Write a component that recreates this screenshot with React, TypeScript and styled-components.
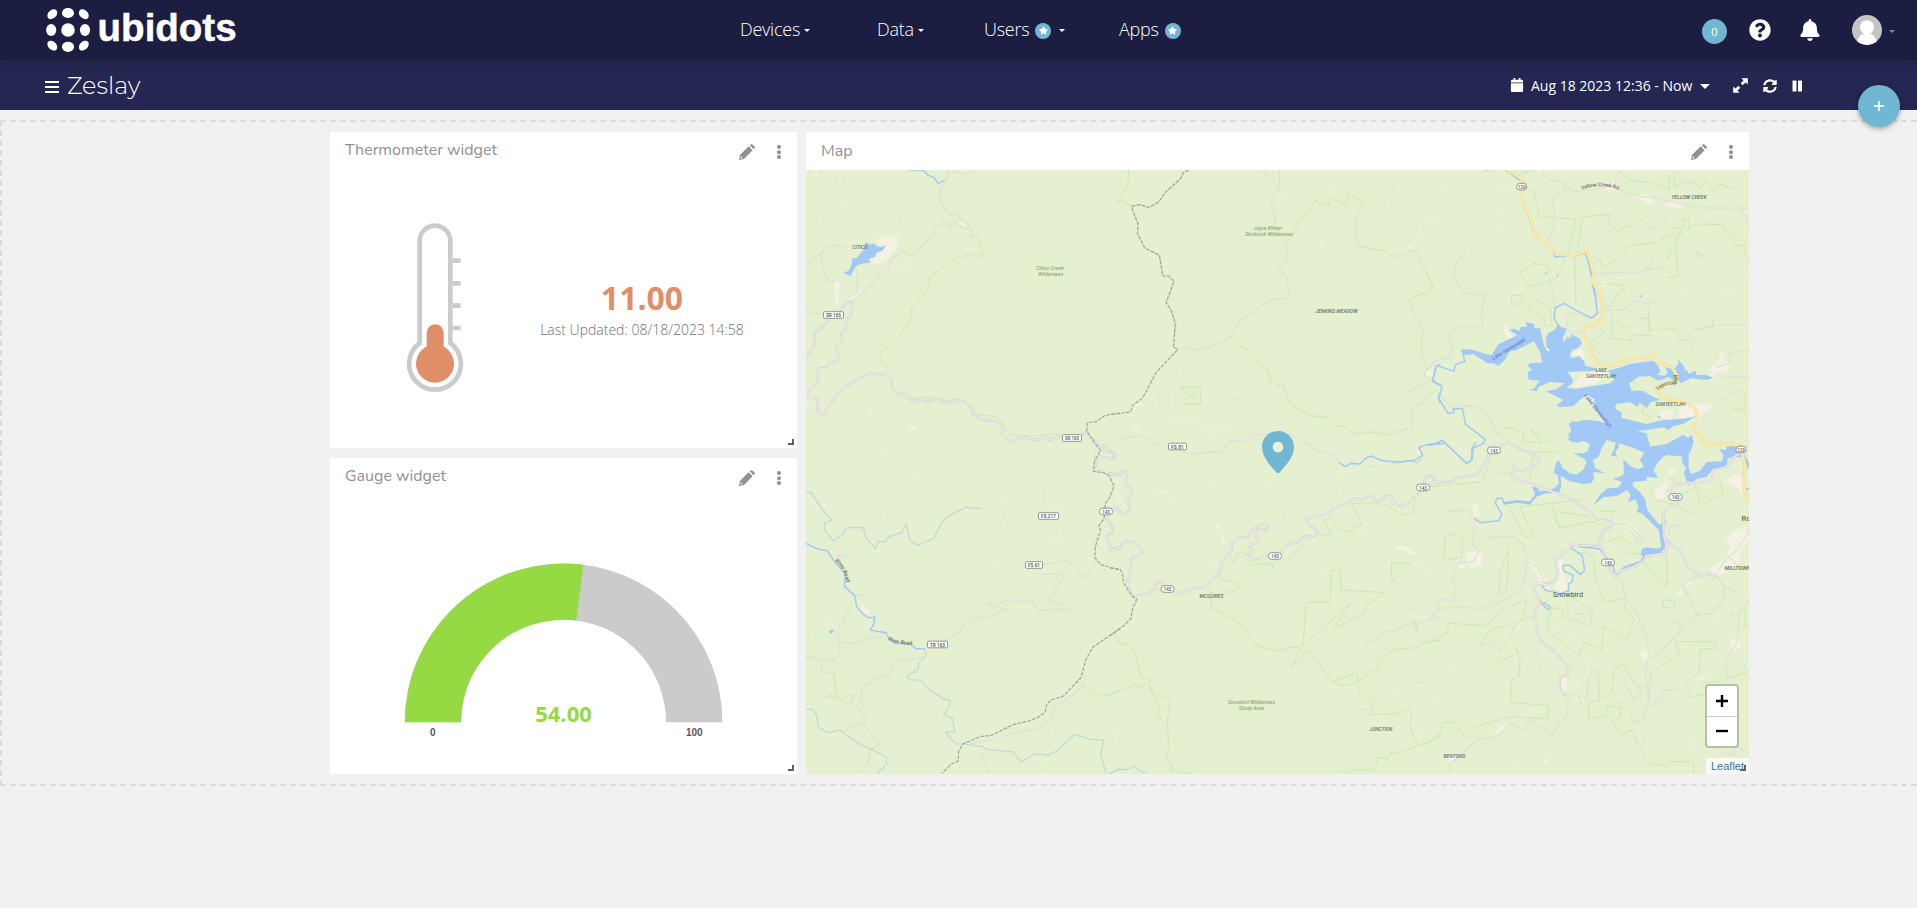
import React from "react";
import styled, { createGlobalStyle } from "styled-components";
import { FaStar, FaQuestionCircle, FaBell, FaCalendar, FaSyncAlt } from "react-icons/fa";

const GlobalStyle = createGlobalStyle`
  * { box-sizing: border-box; }
  body {
    margin: 0;
    background: #f1f1f1;
    font-family: "Open Sans", sans-serif;
    overflow: hidden;
  }
`;

/* ---------- top bar ---------- */

const TopBar = styled.header`
  position: relative;
  z-index: 2;
  display: flex;
  align-items: center;
  height: 60px;
  padding-left: 45px;
  background: #1b1e40;
  color: #fff;
  box-shadow: 0 2px 9px rgba(20, 20, 40, 0.3);
`;

const LogoLink = styled.div`
  width: 695px;
  height: 60px;
`;

const Nav = styled.nav`
  display: grid;
  grid-template-columns: 137px 107px 135px 583px;
`;

const NavItem = styled.div`
  display: flex;
  align-items: center;
  height: 60px;
  font-size: 18px;
  font-weight: 300;
  letter-spacing: -0.25px;
  line-height: 24px;
  padding-bottom: 2px;
`;

const Caret = styled.span<{ $size?: number; $gap?: number; $faded?: boolean }>`
  width: 0;
  height: 0;
  margin-left: ${(p) => p.$gap ?? 4}px;
  margin-top: 3px;
  border: ${(p) => p.$size ?? 3}px solid transparent;
  border-top-color: ${(p) => (p.$faded ? "#8587a0" : "#fff")};
  border-bottom: 0;
`;

const StarBadge = styled.span`
  display: flex;
  align-items: center;
  justify-content: center;
  width: 16px;
  height: 16px;
  margin: 3px 0 0 6px;
  border-radius: 50%;
  background: #71b7d1;
  font-size: 9px;
`;

const UserTools = styled.div`
  display: flex;
  align-items: center;
  height: 58px;
`;

const CountBadge = styled.span`
  display: flex;
  align-items: center;
  justify-content: center;
  width: 25px;
  height: 25px;
  margin: 3px 22px 0 0;
  border-radius: 50%;
  background: #71b7d1;
  font-size: 11px;
`;

const Avatar = styled.svg`
  margin-left: 31px;
`;

const HelpIcon = styled(FaQuestionCircle)`
  margin-right: 28px;
`;

/* ---------- dashboard bar ---------- */

const DashBar = styled.div`
  display: flex;
  align-items: center;
  height: 50px;
  padding: 0 114px 0 45px;
  background: #232751;
  color: #fff;
`;

const MenuButton = styled.div`
  display: flex;
  flex-direction: column;
  gap: 3px;
  width: 14px;
  margin: 3px 8px 0 0;
  span {
    height: 2px;
    background: #fff;
  }
`;

const DashTitle = styled.h1`
  margin: 2px 0 0;
  font-family: Montserrat, Inter, sans-serif;
  font-size: 24px;
  font-weight: 300;
  line-height: 30px;
  flex: 1;
`;

const DateRange = styled.div`
  display: flex;
  align-items: center;
  font-size: 14px;
  span:first-of-type {
    width: 163px;
    margin-left: 7px;
    white-space: nowrap;
  }
`;

const DashActions = styled.div`
  display: flex;
  align-items: center;
  margin: 1px 0 0 23px;
  gap: 15px;
`;

const AddButton = styled.button`
  position: absolute;
  z-index: 3;
  top: 85px;
  left: 1858px;
  display: flex;
  align-items: center;
  justify-content: center;
  width: 42px;
  height: 42px;
  padding: 0;
  border: 0;
  border-radius: 50%;
  background: #71b7d1;
  box-shadow: 0 2px 5px rgba(0, 0, 0, 0.3);
`;

/* ---------- widgets ---------- */

const Board = styled.main`
  display: grid;
  grid-template-columns: 467px 943px;
  grid-template-rows: 316px 316px;
  gap: 10px 9px;
  height: 666px;
  margin-top: 10px;
  padding: 10px 0 0 328px;
  border: 2px dashed #dcdcdc;
  border-right: 0;
`;

const Widget = styled.section<{ $tall?: boolean }>`
  position: relative;
  display: flex;
  flex-direction: column;
  grid-row: ${(p) => (p.$tall ? "1 / span 2" : "auto")};
  grid-column: ${(p) => (p.$tall ? 2 : 1)};
  background: #fff;
`;

const WidgetHeader = styled.div`
  display: flex;
  align-items: center;
  height: 38px;
  padding: 0 16px 0 15px;
  color: #919194;
`;

const WidgetTitle = styled.h2<{ $drop?: number }>`
  flex: 1;
  margin: ${(p) => p.$drop ?? 0}px 0 2px;
  font-family: Nunito, "Open Sans", sans-serif;
  font-size: 16px;
  font-weight: 400;
  line-height: 22px;
`;

const Dots = styled.svg`
  margin: 2px 0 0 22px;
`;

const Pencil = styled.svg`
  margin-top: 2px;
`;

const ResizeHandle = styled.span`
  position: absolute;
  z-index: 2;
  right: 3px;
  bottom: 3px;
  width: 6px;
  height: 6px;
  border: solid #606063;
  border-width: 0 2px 2px 0;
`;

const ThermoBody = styled.div`
  display: flex;
  align-items: flex-start;
  padding: 51px 0 0 76px;
`;

const Reading = styled.div`
  width: 280px;
  margin: 55px 0 0 38px;
  text-align: center;
`;

const ReadingValue = styled.div`
  font-size: 32px;
  font-weight: 700;
  line-height: 44px;
  color: #e08e68;
`;

const ReadingTime = styled.div`
  font-size: 14px;
  font-weight: 300;
  line-height: 19px;
  color: #6e6e72;
`;

const GaugeBody = styled.div`
  padding: 66px 0 0 73px;
`;

const MapCanvas = styled.div`
  position: relative;
  flex: 1;
  overflow: hidden;
`;

const MapSvg = styled.svg`
  display: block;
`;

const ZoomControl = styled.div`
  position: absolute;
  right: 10px;
  bottom: 26px;
  width: 34px;
  border: 2px solid rgba(0, 0, 0, 0.2);
  border-radius: 4px;
  background: #fff;
  background-clip: padding-box;
`;

const ZoomKey = styled.div`
  display: flex;
  align-items: center;
  justify-content: center;
  height: 30px;
  & + & {
    padding-bottom: 2px;
    border-top: 1px solid #ccc;
  }
`;

const Attribution = styled.div`
  position: absolute;
  right: 0;
  bottom: 0;
  height: 16px;
  padding: 0 5px;
  background: rgba(255, 255, 255, 0.7);
  font: 11px/16px "Liberation Sans", Arial, sans-serif;
  color: #3a73ad;
`;

/* ---------- map data: coordinates are thirds of a pixel inside each tile ---------- */

type Tile = {
  x: number;
  y: number;
  roads?: string[];
  tracks?: string[];
  paths?: string[];
  bounds?: string[];
  rivers?: string[];
  streams?: string[];
  lakes?: string[];
  patches?: string[];
  highways?: string[];
  border?: string[];
};

const tiles: Tile[] = [
  {
    x: 800,
    y: 120,
    rivers: ["M330 150H362L372 153L384 166L402 172L414 190L434 182"],
    bounds: [
      "M446 150L440 180L420 208L418 232L426 250L436 270L448 284L470 282L484 296L516 326L512 350L534 348L542 380L550 410L514 402L466 416L388 470L390 500L336 566L330 600L294 656L250 690L240 716L258 740L262 765",
      "M292 818L320 820L340 836L368 830L410 832L440 842L480 836L512 856L530 884L590 890L616 924L630 948L650 946L690 948L760 942L790 946",
      "M960 234L954 242L960 252",
    ],
    tracks: [
      "M446 150L440 180L420 208L418 232L426 250L436 270L448 284L470 282L484 296L480 302",
      "M456 150L494 164L526 156L526 150",
      "M512 326L484 322L464 304L452 324L438 306L406 320L400 342L342 408L306 394L272 418L266 446L240 464L216 492L180 522L164 540",
      "M172 448L170 520",
      "M18 446L30 420L60 402L84 374L100 374L132 382",
      "M84 374L64 402L68 440L86 484L108 484",
      "M18 566L30 580L70 582",
    ],
    paths: [
      "M98 160L102 210L88 240L64 246",
      "M146 160L140 190L152 206L130 236L134 262L66 280L58 296L72 326L84 372",
      "M268 212L280 206L304 212L308 224",
      "M322 260L300 286L288 290L294 316L294 350",
      "M406 262L412 298L404 320",
      "M26 304L48 298",
      "M250 312L246 330L226 340",
      "M270 456L300 450L330 426",
      "M20 820L40 798L96 784L138 782L148 790",
      "M24 440L22 460L34 474",
      "M720 950L740 976L752 972",
    ],
    patches: [
      "M104 482L118 484L118 510L112 560L106 556Z",
      "M140 542L178 514L188 520L158 540Z",
      "M222 360L262 348L298 354L290 384L270 412L240 430L210 430L226 410L230 398L256 380Z",
      "M304 442L328 422L322 434Z",
      "M338 390L350 376L344 388Z",
      "M332 922L350 918L352 930L326 934Z",
      "M470 304L498 312L506 324L486 316Z",
      "M46 156L54 160L52 172L46 170Z",
      "M192 320L202 316L196 324Z",
      "M454 912L464 902L462 910Z",
      "M18 836L32 846L20 852Z",
      "M208 868L216 866L212 886L206 882Z",
      "M324 952L332 954L326 958Z",
      "M248 984L256 984L254 992Z",
    ],
    lakes: [
      "M196 366L212 374L222 370L232 380L246 382L258 376L248 392L230 398L226 410L206 416L212 428L190 430L172 436L160 450L152 468L130 458L146 452L154 436L158 414L170 414L190 392Z",
    ],
    roads: [
      "M18 714L44 676V640L76 612L100 584L130 562L144 542L156 546L158 576L140 604L138 626L124 640L126 666L108 684L116 712L108 726L88 730L80 745H60L52 752L54 788L30 808L18 828",
      "M18 832H46L52 840V876L64 884L76 880L84 858L104 838L128 802L144 796L210 758L262 766L272 778L278 806L292 826L320 830L336 844L368 838L380 846L410 834L442 850L484 842L514 862L520 884L548 900L594 902L606 914L608 944L636 966L656 956L680 952L704 960L730 952L750 960L770 952L790 954",
      "M846 942L862 936L880 968L910 992",
    ],
    border: ["M960 880L936 882L912 888L892 904L862 908L860 934L882 964"],
  },
  {
    x: 1110,
    y: 120,
    bounds: [
      "M56 150L54 190L26 242L66 258",
      "M508 150V202L482 242L496 286L494 316L524 370L546 352L568 304L592 280L618 240L634 260L640 246L658 258L660 236L708 256L716 218L730 232L760 244L738 300L736 340L744 378L822 392L856 414L892 390L922 396L970 502L962 512L898 536L908 574L938 632L934 700L950 744L942 770L968 786",
      "M362 648L398 686L416 690L474 754L482 788L520 798L538 850L600 888L646 890L676 918L704 920L734 942L790 936L834 946L862 934L908 920L902 880L916 856L936 850L940 838L984 806",
      "M204 688L234 680L260 692L340 666L362 648",
      "M212 802H272V852H220L256 850V830L234 826Z",
      "M236 152L218 160L214 178L168 218L148 246L118 264L90 256L66 260L86 312L84 340L106 384L150 406L160 468H176L194 484L170 548L186 572L198 612L192 682",
    ],
    tracks: [
      "M362 648L390 604L404 594L462 552L490 538L532 536L540 520L530 490L532 474L504 444L528 426L532 390L524 368",
      "M26 946L40 956L82 948L110 956L150 976L170 990",
      "M340 990L352 968L374 962L400 964L430 948L470 940L540 942L580 966L620 990",
      "M260 692L340 666",
      "M888 824L908 808L942 788",
      "M944 758L968 728L990 716",
      "M506 202L490 180L460 152",
    ],
    paths: [
      "M508 202L524 240L560 222L596 220L580 200L600 186L570 180",
      "M640 220L650 206L670 204L674 190L706 196L712 184L738 160L748 160L740 150",
      "M950 174L936 164L902 168L888 186L864 192L862 222L830 244L832 268L798 300L790 320L764 334L744 326",
      "M990 284L974 296L954 290L926 322L936 350L918 358L898 380L866 404",
      "M228 718L206 760L192 800L186 846L192 890",
      "M132 810L136 850L160 896L190 900L220 880L236 896L268 890",
      "M272 792L312 788L318 802L340 832L370 816L400 820L430 784L388 770",
      "M204 912L250 906L294 912L360 916L340 930L300 912L280 922L320 942L274 940L246 926",
      "M450 914L480 916L520 920L590 926L640 934",
      "M120 818H98M106 848L88 858",
      "M48 930L60 916L88 912L74 936L110 938L140 924L158 930",
    ],
    patches: [
      "M624 376L636 362L638 376Z",
      "M892 380L906 370L912 374L888 396L868 404Z",
      "M944 754L970 752L968 768L950 764Z",
      "M294 428L302 430L298 434Z",
      "M234 490L242 490L238 494Z",
      "M62 930L80 914L86 918L70 934Z",
      "M68 878L80 850L104 850L84 860L72 880Z",
    ],
    rivers: ["M990 733L976 744L968 784L990 796", "M990 822L985 832L990 846"],
    border: [
      "M236 150L220 158L212 176L166 216L146 246L118 262L90 254L66 258L68 272L84 312L82 340L104 384L148 406L158 468H176L192 484L168 548L184 572L196 612L190 682L204 688L138 758L98 834L68 856L62 876L0 884",
    ],
  },
  {
    x: 1430,
    y: 120,
    bounds: [
      "M270 164L296 210L312 216L328 290L438 298L414 396L434 414L438 558",
      "M438 414L458 290L542 284L534 308L568 338L580 322L612 314L630 296L672 328L706 300L722 322L760 324V296H776V326L800 312L880 314L892 344L908 350L912 374L946 378L944 404L957 412",
      "M310 150L272 160",
      "M570 156L602 182L646 186L718 206V166L734 170V202L764 182L794 190L808 206L828 184L848 210L872 192L908 206",
      "M488 410L510 420L516 446L588 398L594 378L664 370L754 334L740 350V396L708 416L754 338",
      "M740 400L744 470L710 472",
      "M312 430L268 458L298 500L358 484L362 474L342 462L362 450L340 434Z",
      "M244 526H280L274 552H246Z",
      "M520 560L546 580L544 656L604 660L606 644L666 648L656 626L660 594L628 596L590 626L560 606",
      "M500 490L580 496L582 514L556 526L544 556L520 560",
      "M484 620L500 622L524 634L482 668L488 680L530 724",
      "M654 560L658 630L740 626L748 658L778 660",
      "M346 600L290 562L320 540L360 560L366 620L340 614L346 596",
      "M850 600V622L802 626L768 648",
      "M880 836L920 810L948 820L944 870L908 866L880 836Z",
      "M800 396L818 406L808 416Z",
      "M0 484L10 496L0 508",
      "M606 800L650 840L652 814L602 782",
      "M210 942L224 924L252 922V930L280 934V966L336 968L304 930L366 972",
      "M600 846L640 860L636 880L660 890L640 912",
    ],
    tracks: [
      "M340 162L350 178L400 186L410 210L370 230L372 330L354 352L360 380",
      "M404 206L420 204L430 212L500 208L540 196L610 226L690 236L760 254L790 262L850 264L957 266",
      "M556 190L562 160L576 150",
      "M492 462L560 458H630L656 440L670 420M640 450L706 444",
      "M400 400L406 420L380 470L360 490L370 530L376 560",
      "M0 740L20 720L58 714L66 696L56 650L86 620H160L154 580L168 520L148 524L100 518L70 470L76 430L104 400",
      "M404 660L430 640L460 634L430 636L406 626L412 604L404 588L430 580L466 590L488 596L510 574",
      "M486 706L516 726L550 740",
      "M520 568L580 570L600 556L610 540L650 550L676 540L682 560",
      "M778 640L792 660L786 690",
      "M957 770L880 772M860 740L900 730L900 700L957 690",
      "M768 650L800 628L850 614H957",
      "M926 266L948 290L957 318",
      "M20 820L36 832L62 860L130 858L160 870L184 900L192 930L210 946L240 968",
      "M176 980L200 974L232 966L260 980L280 990",
    ],
    paths: [
      "M36 156L60 176L36 208L60 220L26 262L36 280L0 296",
      "M234 250L200 270L206 330L230 312L260 334",
      "M957 470L926 480L912 518L740 520",
      "M370 232L350 240L340 250",
      "M506 490L530 500L520 480",
      "M580 920L630 890L660 900L720 890",
      "M700 866L730 850L760 870L730 900",
      "M640 300L660 290L680 276",
      "M880 730L910 744L930 770",
      "M786 690L792 710",
      "M230 590L280 600L300 640",
    ],
    patches: [
      "M514 196L556 182L572 200L564 212L530 210Z",
      "M606 230L646 222L672 236L666 250L690 256L736 240L760 256L754 268L730 264L700 252L660 254L640 240Z",
      "M212 208L224 200L230 212Z",
      "M740 890L752 856L800 852L854 850L836 870L812 884L810 900L790 904Z",
      "M844 740L870 720L868 700L884 698L884 720L900 730L896 750L860 760L850 770L862 780L842 784Z",
      "M424 700L452 684L460 700L462 724L444 716Z",
      "M430 804L450 766L500 756L540 756L500 790L470 796Z",
      "M218 618L230 612L240 640L250 650L232 656Z",
      "M506 496L520 478L530 498Z",
      "M684 888L700 872L730 868L726 900Z",
    ],
    rivers: [
      "M96 688L104 724L76 734L72 754L20 736L8 780L36 798L26 836L54 880L72 878L70 866L98 866L106 912L166 958L160 970L130 984L126 1020L110 1030L36 960L16 972L0 976",
      "M226 150L274 184L280 256L296 290L312 340L370 390L374 410L430 408L466 398L484 460L486 490L498 540L502 580L484 594L440 572L400 550L376 564L372 596L386 616",
      "M466 398L478 440L488 486L496 520L500 570",
    ],
    lakes: [
      "M92 694L106 688L130 690L160 700L184 706L206 672L240 656L262 646L238 630L250 626L268 632L272 622L292 620L286 606L312 612L314 626L330 624L336 650L342 676L350 692L362 694L350 680L348 652L356 638L374 630L384 612L392 620L410 626L406 640L398 652L402 670L412 650L420 656L426 644L450 656L456 670L444 684L426 690L420 704L424 714L448 708L462 724L466 738L496 744L500 752L412 756L424 770L430 786L410 804L440 806L540 790L552 780L540 760L530 752L566 744L600 732L670 722L684 736L692 756L682 764L704 768L712 758L706 742L720 740L730 752L746 730L744 718L756 732L766 744L762 754L772 750L776 762L796 752L800 766L826 764L852 774L826 780L800 776L784 774L752 790L742 776L730 782L716 770L700 778L684 782L660 768L626 770L598 790L604 812L636 812L660 826L690 840L662 846L650 864L630 848L622 860L600 846L560 852L554 864L576 880L574 894L600 900L650 912L700 900L760 896L800 888L760 912L730 918L716 930L700 922L650 930L620 934L570 926L560 924L604 936L640 950L660 972L650 1000L600 980L530 960L516 984L450 960L424 966L414 940L434 936L418 912L430 902L450 912L456 900L500 902L530 910L510 886L490 858L494 838L470 824L450 840L430 858L390 862L380 856L400 840L348 814L380 808L404 790L360 786L326 800L320 814L296 810L312 806L330 782L296 780L294 756L306 750L292 736L304 728L336 728L332 700L312 664L260 690L240 694L224 720L206 738L190 730L172 730L130 702L106 706Z",
      "M700 990L720 972L742 960L764 962L786 944L790 966L784 990L770 1010L700 1004Z",
      "M888 980L920 976L936 990L957 1030V1046L930 1010L894 1014Z",
      "M344 456L354 458L348 462Z",
      "M626 526L636 526L634 534Z",
      "M680 886L692 890L688 896Z",
      "M380 462L388 466L382 470Z",
      "M164 150H180L172 153Z",
    ],
    highways: [
      "M232 150L274 174L280 256L300 290L316 342L380 402L428 408L466 392L478 408L492 462L486 484L508 516L520 568L514 600L492 612L464 620L456 640L480 676L484 708L498 726L530 740L570 730L600 716L640 714L672 704L690 728L728 744L742 770L738 786L700 794L682 812L692 832L742 842L776 852L796 868L802 890L786 922L826 970L900 970L930 978L946 1040L940 1100L957 1145",
    ],
  },
  {
    x: 800,
    y: 440,
    streams: [
      "M18 156L34 158L50 184L72 214L96 240L74 250L72 268L100 302L126 286L140 264L190 262L196 290L226 326L234 304L256 306L266 290L306 278L318 252L330 300L352 316L400 296L430 240L460 220L500 202L545 206",
      "M374 626L378 650L356 668L354 688L320 710L332 720L364 720L386 748L430 776L450 782L448 802L432 824L458 836L464 874L436 878L468 912L488 912",
      "M488 912L548 920L560 928L640 936L662 966L700 944L722 942L744 946L776 930L822 884L870 898L912 900L902 940L918 1000",
      "M18 808H38L50 826L54 860L84 878L122 870L140 886L178 912L216 928L258 950L260 972L234 1000",
      "M930 1000L960 984",
    ],
    rivers: [
      "M18 310L50 326L82 332L100 360L134 400L134 440L164 466L170 500L186 520L206 534L224 532L222 550L212 570L230 574L258 578L266 594L282 610L330 612L348 626H374",
    ],
    bounds: [
      "M18 652L44 654L64 668V694L102 698L104 730L112 756L80 770L114 772L140 792L156 788V766L176 768L180 790L168 800L196 834L190 850L238 916L212 926L204 970L178 1000",
      "M832 728L904 770L932 762L960 754",
      "M960 610L942 592V578",
      "M886 320L892 280M940 140L918 190M880 60L890 30",
    ],
    tracks: [
      "M168 466L196 464L208 448",
      "M152 486L156 500L134 526L132 548L116 560L114 600L130 610L186 608L190 596L240 594L256 578",
      "M116 600L120 640L96 662L46 656L18 648",
      "M374 650L356 656L302 660L280 672L266 706L240 710L184 742L190 800",
      "M440 602L476 576L510 536L560 532L618 508L560 494L600 490L624 478L648 484L700 484L712 510L780 508L810 512L784 490L742 482L760 470L764 448L792 408L780 402L716 402",
      "M728 374L800 362L828 380L848 412L866 402L888 366",
      "M490 912L540 906L580 900L640 878L700 870L750 840L760 800L800 780L846 740L858 706",
      "M180 850L150 862L130 878",
      "M100 300L108 318L142 344L136 352L106 346",
      "M628 0L640 6L650 0",
      "M540 950L562 982L570 1000M544 950L560 934",
    ],
    paths: [
      "M18 276L40 264M180 312L190 330L240 336L270 330L300 350L350 346L400 364L440 376L480 398L500 380L540 378L600 362L650 364L700 360L740 330L784 314",
      "M570 206L600 190L614 162L640 164",
      "M640 172L610 190L600 230L628 280L660 292L670 262",
      "M740 190L744 150L764 130L796 106",
      "M722 204L800 192L850 166L880 154L924 114",
      "M774 190L760 236M770 260L786 290L740 306L780 310",
      "M20 430L50 400M60 450L90 472L100 510L84 548L44 566L36 590",
      "M580 378L600 410V440",
      "M870 300L860 340L880 370M864 250L890 240",
      "M420 960L440 900",
      "M750 900L764 860L790 830L780 816L850 808",
      "M850 810L920 824L950 810M700 950L740 970L740 1000",
      "M196 850L210 870L236 900",
    ],
    patches: [
      "M66 196L82 188L74 206Z",
      "M350 98L360 96L358 104Z",
      "M354 126L364 126L360 132Z",
      "M376 116L382 118L380 124Z",
      "M246 232L258 232L250 236Z",
      "M258 28L266 38L262 46Z",
      "M180 498L192 498L210 512L198 524Z",
      "M142 246L150 248L146 252Z",
      "M740 10L754 14L742 20Z",
      "M716 400L740 398L760 392L742 406Z",
      "M956 168L960 180L952 184Z",
    ],
    lakes: ["M86 574L100 568L102 574L92 582Z"],
    roads: [
      "M882 0L900 20L918 18L922 32L944 40L940 56L914 52L898 50L886 70L890 90L926 100L960 106",
      "M914 206L950 202L960 216",
      "M914 230L936 256V276L920 290L932 324L960 326",
    ],
    border: [
      "M878 0L902 32L884 62L880 94L912 98L928 108L942 138L932 168L916 190L912 236L896 258L902 272L886 320L884 352L902 374L960 390",
      "M960 566L880 620L858 658L842 714L798 760L788 770L752 780L738 798L736 816L714 832L690 842L640 854L574 886L540 890L488 912L476 934L474 964L454 972L426 1000",
    ],
  },
  {
    x: 1110,
    y: 440,
    roads: [
      "M0 106H16L40 94L50 98L46 134L68 148L64 160L52 170L60 210L46 222L30 218L20 208L0 208",
      "M0 36H14L12 50L0 58",
      "M0 252L8 264L0 280",
      "M0 330L20 328L50 302L74 306L98 334L90 346L64 354L60 406L50 426L66 468L100 466L122 458L146 424L158 430L160 444",
      "M192 452L210 460L240 452L290 434L330 394L334 370L366 330L364 308L382 294L416 290L424 272L460 250L474 256L472 270L446 268L434 282L444 300L440 310L416 314L426 334L412 348L414 358L446 356L464 344L474 348",
      "M514 336L536 310L560 308L582 292L622 284L620 272L590 246L594 236L660 220L668 206L720 190L730 178L758 180L780 164L798 182L822 178L828 168L844 170L848 190L870 198L892 190L928 158",
      "M942 130L950 108L968 110L972 128H990",
    ],
    rivers: [
      "M688 68L706 80L724 70L750 72L766 56L784 48L810 60L830 64L872 66L916 60L938 46L926 22L950 14L990 12",
    ],
    streams: ["M0 1000L24 990L50 988L72 978L98 996L110 1000", "M850 70L890 62L924 68L934 56"],
    tracks: [
      "M218 34L240 44L300 36L336 34L350 8L370 0",
      "M590 8L620 32L640 36L670 42L688 66",
      "M766 612L800 602L826 576L860 572L880 556L930 548L990 534",
      "M990 474L980 490L990 510L960 540",
    ],
    paths: [
      "M236 52L220 80L180 98L134 146L180 160L210 154L184 190L214 176L266 152L300 120",
      "M290 112L300 138L330 126L370 112L382 100L420 108L470 124L492 110L500 98",
      "M300 70L320 80L370 70L382 60",
      "M40 144L30 180L38 200",
      "M370 196L400 180L410 160",
      "M460 136L480 130L470 120",
      "M540 200L528 236L548 250L560 280",
      "M616 130L700 98L740 90L790 88L830 100L870 98",
      "M690 90L700 120L690 160M860 140L900 110",
      "M596 366L610 390L650 394L666 368L700 360",
      "M334 514L350 494L380 470L424 446",
      "M722 490L740 520L780 516L810 522L860 514L900 526L950 530L980 540",
      "M694 656L740 640L780 608",
      "M860 692L880 680L930 686L990 660M850 750L920 736L960 740L990 780",
      "M780 750L850 764L900 772L940 770L990 800",
      "M860 910L920 880L990 880M880 830L920 840L930 900",
      "M740 260L760 270L750 300M680 230L730 240L800 230",
      "M730 800L770 800L790 790",
      "M0 920L20 900L16 870L78 850M70 930L50 900",
      "M130 960L150 980L170 984L180 1000",
    ],
    bounds: [
      "M100 466L124 450L154 448M230 452L280 444L322 466L386 446L378 426L332 420V388",
      "M304 470V506L366 534L398 562L440 616L500 634L530 624L574 620L724 488L670 566L762 520L766 498L824 458L692 450V392H664L660 486H588L580 610",
      "M580 610L544 682L596 632L668 724L742 700L744 722L720 736H692L668 724",
      "M744 722L804 684L808 664L850 628L910 624L940 610L990 600",
      "M744 722L748 754L790 786L784 824L860 822L900 808L904 822L900 864L922 916",
      "M990 880L960 906L922 916L872 940L842 938L836 956L804 952L794 990H728L712 1000L690 992L682 1000",
      "M14 580L36 614L50 608L76 640L92 710L120 722L122 750L156 768L182 780L172 840L176 920L170 950L186 980L210 1000L250 998",
      "M0 766L76 732L82 744L112 730L152 810L140 816L170 872",
      "M358 346L372 368L386 336L424 344L420 376L480 370L488 384L490 366L540 354L582 308L600 292",
      "M726 192L774 188L828 194L880 226L908 216L922 160M726 192L754 256L728 262L730 272L702 274L680 260L664 230L640 240L664 286L640 288L622 276",
      "M844 370H902L846 424Z",
      "M186 980V1000M908 540L924 560L920 574Z",
      "M960 138H990",
    ],
    patches: [
      "M314 256L326 252L332 262L318 270Z",
      "M334 284L348 300L342 316L334 310Z",
      "M850 314L890 322L916 338L900 344L880 330L856 326Z",
      "M936 360L944 386L954 396L940 392Z",
      "M594 280L606 272L616 282Z",
      "M22 180L36 176L34 186Z",
      "M300 360L306 380L302 390Z",
      "M134 148L170 158L162 162L134 152Z",
      "M910 30L930 24L930 44Z",
      "M168 322L180 322L176 326Z",
    ],
    border: ["M0 384L30 388L38 400L40 428L66 468L80 478L66 512L64 534L40 558L4 584L0 586"],
  },
  {
    x: 1430,
    y: 440,
    roads: [
      "M0 128H10L14 120L10 108L0 106",
      "M10 128L60 126L90 110L140 104L160 76L176 46L180 36",
      "M206 22L232 10L250 14L270 30L300 36L330 60L320 76L270 92L250 78L248 108L268 122L300 128L320 140L376 158L410 170L432 180L450 196L474 210L502 238L544 246V266L520 268L516 282L504 300L514 320",
      "M520 330L526 350M538 386L548 400L560 410L576 392L610 382L640 362L650 348L704 340L714 320L702 290L700 220L716 200L740 190M730 160L716 150L740 132L776 128L800 130L846 118L850 92L890 80L912 50L930 40",
      "M706 292L730 320L750 330L770 376L810 410L840 402L860 408",
      "M310 440L320 428L340 430M500 318L444 316L428 310L420 326L400 332L396 352L376 356L384 400L378 420L350 434L322 430L310 446L330 486L312 524L324 580L330 600L370 632L418 684L412 706L390 710L388 736L404 766",
    ],
    rivers: [
      "M0 12L46 10L110 70L124 62L126 26L136 8",
      "M134 236L150 248L206 242L216 224L196 190L200 176L216 174L222 190L262 184L300 190L316 166L330 156L388 154",
      "M556 410L550 380L526 350L508 326L450 320L432 310L424 324L456 346L464 390L452 404L420 376L400 376V392L430 406L426 426L416 430L416 452L388 462",
      "M330 430L346 450L372 456M328 478L344 500L356 510L360 500L342 488",
      "M946 146H957",
    ],
    lakes: [
      "M470 -60L416 -50L424 -30L414 0L440 8L464 2L480 12L474 32L462 40L430 40L462 56L470 66L460 90L440 104L420 100L398 84L388 64L384 60L376 76L372 98L382 104L388 130L374 144L352 152L330 156L318 138L306 142L316 162L300 184L262 180L222 186L222 194L262 188L300 194L320 170L348 160L386 158L394 140L392 108L420 124L460 132L482 130L492 118L490 96L524 100L496 84L488 60L506 50L516 20L512 0L530 -20L560 -6L552 30L542 46L560 50L556 34L568 20L564 6L600 4L644 14L640 44L630 60L642 80L624 88L604 80L580 58L582 100L576 108L548 116L576 126L566 142L530 146L510 164L490 196L520 172L560 168L592 150L602 166L594 186L616 178L626 200L620 216L636 220L686 270L694 320L680 326L652 322L636 326L632 346L640 348L630 362L580 380L572 392L552 406L556 412L576 398L586 384L636 370L648 344L690 342L706 322L698 270L706 246L688 254L652 210L646 180L632 158L608 138L610 126L650 122L650 110L684 114L670 90L682 70L700 50L724 40L756 34V66L768 84L762 100L774 136L800 118L830 110L850 86L890 80L894 50L916 34L912 20L884 30L866 26L880 44L876 64L830 66L810 92L784 102L776 84V40L784 0L760 -16L710 12L660 20L650 -20L560 -40Z",
      "M800 524L806 526L802 530ZM906 520L912 522L908 526ZM904 708L910 710L906 714ZM940 672L946 674L942 678ZM884 180L888 182L884 184Z",
    ],
    highways: ["M812 0L830 14L904 12L932 20L946 80L940 140L957 184"],
    tracks: [
      "M0 538L20 510L70 500L160 506L240 472L280 440L288 390L286 320L250 290L184 292L160 306",
      "M20 480L70 480L80 450L66 410L80 390L84 370L130 366L150 330L128 316L134 240",
      "M574 412L584 470L620 520L650 590L656 640L646 700L656 780L640 840L610 850L604 820",
      "M656 656L690 640L750 570L800 520L770 460L760 430L810 406",
      "M856 404L896 350L920 330L940 300L957 270M860 408L884 440L880 480L850 516M896 350L936 390L957 380",
      "M880 440L930 460M802 520L860 524M957 480L926 520L924 600L886 666L896 720",
      "M60 1000L60 970L110 930L140 900L200 890L240 850L280 870L300 840L370 886L384 850L410 830L416 780L404 766L440 760L456 790",
      "M310 534L280 536L250 564L246 590L206 632L190 614L160 612",
      "M290 366L320 380L340 420M414 430L410 480L416 530M430 520L460 522L486 510",
      "M742 748L700 750L690 780L656 800M714 540L750 550L750 580",
      "M746 200L790 222M760 256L720 260L716 280M740 130L720 110",
      "M206 98L240 104L256 76L260 92M524 268L556 250L600 256L640 300L630 320",
      "M130 230L110 210L50 216M860 920L880 940L910 942L920 920L957 940",
    ],
    paths: [
      "M44 682L100 664L120 650M44 684L110 700L160 720L240 734L300 760",
      "M130 740L180 750L240 790L290 800L330 830",
      "M356 560L400 570L420 600L460 610L420 590L390 570L370 540",
      "M540 300L600 340L620 290",
      "M20 790L60 800L130 780M30 70L80 50M520 340L560 320",
      "M330 580L340 700M460 640L480 690L464 730",
      "M490 620L530 600M560 770L590 770",
      "M740 900L760 890L800 910L790 930L750 920Z",
      "M380 960L430 990L450 980M620 860L640 930",
    ],
    bounds: [
      "M0 606L50 580L56 550L166 556L220 510L290 478L280 540L180 570L150 612L200 668L264 640L258 620L270 650L268 710L244 720L242 788L356 796L352 836L240 830L140 860L108 896L70 846L38 848L28 888L0 906",
      "M236 328L210 400L206 470L230 450Z",
      "M46 284H82L98 300L94 350L42 362Z",
      "M230 190L286 290L310 292L270 200L366 190L374 240L390 264L480 244L544 264M366 190L460 180M388 260L374 214L480 230",
      "M516 214H552L544 230M514 290L520 310L566 292L612 318L624 294L600 270",
      "M440 340L468 336L490 350L496 410L524 488L580 476M576 420L586 470L584 510L614 536L590 596L520 560L516 630L460 606L448 648L400 610L350 570L364 504L400 506L398 530L480 556L488 512L420 470",
      "M590 340L702 344L706 330L712 380V436L700 436L640 370",
      "M710 340L714 436L640 360M706 240L720 280",
      "M470 780L476 706L504 690L508 780L546 756L552 690L580 674L620 740L638 740L612 780L580 720M508 780L476 790V836L526 828L532 796L572 804L570 832L544 842L570 884L604 870L656 970L710 978L720 964L792 966L790 1000",
      "M604 870L600 876M656 790L662 700L750 640L736 604L856 606V626H812L806 700L764 734L786 772L830 760M810 730L870 724L957 694",
      "M698 480L736 482L730 508L700 500Z",
      "M660 150L680 180L740 196L760 160L800 140L810 196L880 160L870 120",
      "M160 120L180 60M300 120L310 36H380M0 140L150 126",
      "M940 510H957M944 512V556H957",
    ],
    patches: [
      "M288 366L310 366L340 406L350 420L330 432L320 400Z",
      "M376 354L400 352L396 380L410 430L420 410L418 454L400 460L370 440L384 420Z",
      "M112 340L150 330L160 350L150 380L120 384L108 372Z",
      "M262 544L276 540L266 570L252 548Z",
      "M80 376L100 370L108 384L84 384Z",
      "M666 168L700 130L716 116L700 170L690 180Z",
      "M712 94L730 80L738 94L724 108Z",
      "M840 384L884 360L900 320L888 300L910 274L950 260L957 300L930 330V370L910 380L880 400L850 410Z",
      "M880 120L920 100L936 110L938 170L930 150Z",
      "M736 460L756 448L760 460L750 468Z",
      "M902 600L930 590L930 620L908 640Z",
      "M626 644L650 624L664 650L656 664Z",
      "M190 880L220 852L240 850L230 868L200 886Z",
      "M44 970L56 952L90 950L70 964Z",
      "M390 724L400 708L412 720L404 764L396 750Z",
      "M560 256L600 250L626 270L620 290L590 262Z",
      "M806 714L826 708L828 716L810 722Z",
      "M126 190L140 196L150 230L130 226Z",
      "M340 960L350 950L356 966L344 976ZM256 966L268 970L262 976Z",
      "M336 434L352 430L366 454L344 450Z",
      "M850 516L870 524L862 536Z",
      "M430 720L446 724L440 734Z",
      "M432 764L462 780L456 788L436 776Z",
      "M922 120L936 124L936 160Z",
      "M766 430L784 424L786 434L768 440Z",
    ],
  },
];

const line = { fill: "none", strokeLinejoin: "round", strokeLinecap: "round" } as const;

function Lines({ d = [], color, width, dash }: { d?: string[]; color: string; width: number; dash?: string }) {
  return (
    <path
      d={d.join("")}
      {...line}
      strokeLinecap={dash ? "butt" : "round"}
      stroke={color}
      strokeWidth={width}
      strokeDasharray={dash}
    />
  );
}

function Layer({ draw }: { draw: (t: Tile) => React.ReactNode }) {
  return (
    <>
      {tiles.map((t) => (
        <g key={`${t.x}-${t.y}`} transform={`translate(${t.x} ${t.y}) scale(0.33333)`}>
          {draw(t)}
        </g>
      ))}
    </>
  );
}

/* road shields: centre x, centre y, width, label, oval */
const shields: [number, number, number, string, boolean][] = [
  [833.5, 315, 20, "SR 165", false],
  [1072, 438, 19, "SR 165", false],
  [1177.5, 446.5, 18, "FS 81", false],
  [1048.5, 516, 20, "FS 217", false],
  [1034, 565, 17, "FS 61", false],
  [937.5, 644.5, 20, "TR 163", false],
  [1106, 511.5, 13, "143", true],
  [1167.5, 589, 13, "143", true],
  [1275, 556, 13, "143", true],
  [1423, 487.5, 13, "143", true],
  [1494, 450.5, 13, "143", true],
  [1675.5, 497, 13, "143", true],
  [1608, 562.5, 13, "143", true],
  [1521.7, 186.7, 10, "129", true],
  [1741, 449.5, 10, "129", true],
];

/* place names: centre x, baseline y, width, label, colour, rotation */
const places: [number, number, number, string, string, number][] = [
  [860, 249, 15, "CITICO", "#6b706b", 0],
  [1050, 270.2, 28, "Citico Creek", "#8fa97c", 0],
  [1050.5, 276.2, 25, "Wilderness", "#8fa97c", 0],
  [1268.5, 229.8, 30, "Joyce Kilmer-", "#8fa97c", 0],
  [1269, 235.8, 48, "Slickrock Wilderness", "#8fa97c", 0],
  [1336.5, 313.2, 42, "JENKINS MEADOW", "#6a6f68", 0],
  [1689, 199.2, 35, "YELLOW CREEK", "#6a6f68", 0],
  [1601, 371.8, 11, "LAKE", "#60706e", 0],
  [1601, 377.8, 30, "SANTEETLAH", "#60706e", 0],
  [1670.5, 405.8, 30, "SANTEETLAH", "#6a6f68", 0],
  [1211.5, 597.8, 24, "MCGUIRES", "#6a6f68", 0],
  [1251.5, 704, 47, "Snowbird Wilderness", "#8fa97c", 0],
  [1251.5, 710, 25, "Study Area", "#8fa97c", 0],
  [1381, 730.8, 23, "JUNCTION", "#6a6f68", 0],
  [1454.5, 758.4, 22, "BENTONS", "#6a6f68", 0],
  [1737.5, 569.8, 26, "MILLTOWN", "#6a6f68", 0],
  [1509.5, 350.5, 38, "Lake Santeetlah", "#7a79c8", -31],
  [1596.5, 412, 41, "Lake Santeetlah", "#7a79c8", 52],
];

function MapDrawing() {
  return (
    <MapSvg width="943" height="604" viewBox="806 170 943 604">
      <defs>
        <path id="yellowCreekRd" d="M1582 190Q1600 182 1622 191" />
        <path id="riverRoadNorth" d="M835 561Q845 568 847.5 588" />
        <path id="riverRoadSouth" d="M888 640Q898 645 918 645" />
        <path id="tapocoRd" d="M1658 391Q1664 383 1675 385Q1680 381 1675 368" />
      </defs>
      <rect x="806" y="170" width="943" height="604" fill="#e4f0cf" />
      <Layer draw={(t) => <path d={(t.patches ?? []).join("")} fill="#f5f2e4" />} />
      <Layer draw={(t) => <Lines d={t.paths} color="#eff0db" width={2.8} />} />
      <Layer draw={(t) => <Lines d={t.bounds} color="#c6e0a6" width={3} dash="5 3" />} />
      <Layer
        draw={(t) => (
          <>
            <Lines d={t.tracks} color="#dbdccd" width={3.8} />
            <Lines d={t.tracks} color="#edecde" width={1.6} />
          </>
        )}
      />
      <Layer draw={(t) => <Lines d={t.streams} color="#c0d7d5" width={3.4} />} />
      <Layer draw={(t) => <Lines d={t.rivers} color="#a2c9f3" width={4.4} />} />
      <Layer draw={(t) => <path d={(t.lakes ?? []).join("")} fill="#a2c8f6" />} />
      <Layer
        draw={(t) => (
          <>
            <Lines d={t.roads} color="#d3cfce" width={7.4} />
            <Lines d={t.roads} color="#f0ecec" width={3.6} />
          </>
        )}
      />
      <Layer
        draw={(t) => (
          <>
            <Lines d={t.highways} color="#e8dcae" width={9.5} />
            <Lines d={t.highways} color="#fdeba6" width={6} />
          </>
        )}
      />
      <Layer draw={(t) => <Lines d={t.border} color="#a0a59b" width={3.6} dash="11 4" />} />

      {shields.map(([x, y, w, label, oval]) => (
        <g key={`${x}-${y}`}>
          <rect
            x={x - w / 2}
            y={y - 3.3}
            width={w}
            height={6.6}
            rx={oval ? 3 : 1}
            fill="#fff"
            stroke="#7c7f7a"
            strokeWidth="0.8"
          />
          <text
            x={x}
            y={y + 2}
            textAnchor="middle"
            fontFamily="Roboto, sans-serif"
            fontSize="5.4"
            fontWeight="500"
            fill="#4d504c"
            textLength={oval ? 7.5 : w - 5}
            lengthAdjust="spacingAndGlyphs"
          >
            {label}
          </text>
        </g>
      ))}

      {places.map(([x, y, w, label, color, turn]) => (
        <text
          key={`${label}-${x}-${y}`}
          x={x}
          y={y}
          transform={turn ? `rotate(${turn} ${x} ${y})` : undefined}
          textAnchor="middle"
          fontFamily="Roboto, sans-serif"
          fontStyle="italic"
          fontWeight="500"
          fontSize="5.2"
          textLength={w}
          lengthAdjust="spacingAndGlyphs"
          fill={color}
        >
          {label}
        </text>
      ))}

      <g fontFamily="Roboto, sans-serif" fontSize="5.2" fontWeight="500" fill="#6f6c58">
        <text>
          <textPath href="#yellowCreekRd">Yellow Creek Rd.</textPath>
        </text>
        <text>
          <textPath href="#riverRoadNorth">River Road</textPath>
        </text>
        <text>
          <textPath href="#riverRoadSouth">River Road</textPath>
        </text>
        <text>
          <textPath href="#tapocoRd">Tapoco Road</textPath>
        </text>
      </g>
      <g fontFamily="Roboto, sans-serif" fill="#4c4f4c">
        <text x="1553" y="597.2" fontSize="7.2" textLength="30">
          Snowbird
        </text>
        <text x="1741.5" y="520.6" fontSize="8">
          Ro
        </text>
      </g>

      <path
        fillRule="evenodd"
        fill="#71b7d1"
        d="M1278 431C1269 431 1262 438 1262 447C1262 457 1270 465 1276.3 472.4Q1278 474 1279.7 472.4C1286 465 1294 457 1294 447C1294 438 1287 431 1278 431ZM1278 441.8a5.2 5.2 0 1 1 0 10.4a5.2 5.2 0 1 1 0 -10.4Z"
      />
      <circle cx="1278" cy="447" r="5.2" fill="#e9f3da" />
    </MapSvg>
  );
}

/* ---------- small drawings ---------- */

function Logo() {
  return (
    <svg width="200" height="60" viewBox="45 0 200 60" fill="#fff">
      <ellipse cx="52.3" cy="14.2" rx="5.7" ry="4.1" transform="rotate(-45 52.3 14.2)" />
      <ellipse cx="68" cy="13" rx="6.1" ry="5.1" />
      <ellipse cx="83.8" cy="14.2" rx="5.7" ry="4.1" transform="rotate(45 83.8 14.2)" />
      <ellipse cx="51.2" cy="30" rx="5.1" ry="6.1" />
      <circle cx="68" cy="30" r="6.8" />
      <ellipse cx="85" cy="30" rx="5.1" ry="6.1" />
      <ellipse cx="52.3" cy="45.6" rx="5.7" ry="4.1" transform="rotate(45 52.3 45.6)" />
      <ellipse cx="68" cy="46.8" rx="6.1" ry="5.1" />
      <ellipse cx="83.8" cy="45.6" rx="5.7" ry="4.1" transform="rotate(-45 83.8 45.6)" />
      <text
        x="97.6"
        y="40.6"
        fontFamily="Liberation Sans, Arial, sans-serif"
        fontWeight="700"
        fontSize="38.5"
        textLength="139"
        lengthAdjust="spacingAndGlyphs"
        stroke="#fff"
        strokeWidth="0.5"
        strokeLinejoin="round"
      >
        ubidots
      </text>
    </svg>
  );
}

function Thermometer() {
  return (
    <svg width="58" height="172" viewBox="258 303 174 516">
      <path
        d="M299 669V363a46 46 0 0 1 92 0V669a77.5 77.5 0 1 1 -92 0Z"
        fill="none"
        stroke="#cbcbcb"
        strokeWidth="14"
      />
      <path d="M398 422h24M398 490h24M398 557h24M398 624h24" stroke="#cbcbcb" strokeWidth="14" />
      <path d="M320 690V638a25.5 25.5 0 0 1 51 0V690Z" fill="#e08e68" />
      <circle cx="345" cy="731" r="57" fill="#e08e68" />
    </svg>
  );
}

function Gauge({ value }: { value: number }) {
  const angle = Math.PI * (1 - value / 100);
  const at = (r: number) => `${159.5 + r * Math.cos(angle)} ${162.3 - r * Math.sin(angle)}`;
  return (
    <svg width="322" height="182" viewBox="-1 2 322 182">
      <path d="M0.5 162.3A159 159 0 0 1 318.5 162.3H262A102.5 102.5 0 0 0 57 162.3Z" fill="#cbcbcb" />
      <path
        d={`M1 162.3A158.5 158.5 0 0 1 ${at(158.5)}L${at(102.5)}A102.5 102.5 0 0 0 57 162.3Z`}
        fill="#95d943"
      />
      <text
        x="159.5"
        y="162"
        textAnchor="middle"
        fontFamily="Open Sans, sans-serif"
        fontSize="22"
        fontWeight="700"
        fill="#95d943"
      >
        {value.toFixed(2)}
      </text>
      <g fontFamily="Liberation Sans, Arial, sans-serif" fontSize="10" fontWeight="700" fill="#55565a" textAnchor="middle">
        <text x="28.7" y="176">0</text>
        <text x="290.3" y="176">100</text>
      </g>
    </svg>
  );
}

function Header({ title, drop }: { title: string; drop?: number }) {
  return (
    <WidgetHeader>
      <WidgetTitle $drop={drop}>{title}</WidgetTitle>
      <Pencil width="16" height="16" viewBox="0 0 48 48" fill="currentColor">
        <path
          fillRule="evenodd"
          d="M0 48L3 33L29 7L41 19L15 45ZM6 37L4.5 43.5L11 42Z"
        />
        <path d="M32 4L35 1.5Q38 -0.5 41 2L46 7Q49 10 46.500 13L44 16Z" />
      </Pencil>
      <Dots width="4" height="14" fill="currentColor">
        <circle cx="2" cy="2" r="2" />
        <circle cx="2" cy="7.2" r="2" />
        <circle cx="2" cy="12" r="2" />
      </Dots>
    </WidgetHeader>
  );
}

export default function App() {
  return (
    <>
      <GlobalStyle />
      <TopBar>
        <LogoLink>
          <Logo />
        </LogoLink>
        <Nav>
          <NavItem>
            Devices
            <Caret />
          </NavItem>
          <NavItem>
            Data
            <Caret />
          </NavItem>
          <NavItem>
            Users
            <StarBadge>
              <FaStar />
            </StarBadge>
            <Caret $gap={8} />
          </NavItem>
          <NavItem>
            Apps
            <StarBadge>
              <FaStar />
            </StarBadge>
          </NavItem>
        </Nav>
        <UserTools>
          <CountBadge>0</CountBadge>
          <HelpIcon size={22} />
          <FaBell size={22} />
          <Avatar width="30" height="30" viewBox="0 0 30 30">
            <defs>
              <clipPath id="avatarRound">
                <circle cx="15" cy="15" r="15" />
              </clipPath>
            </defs>
            <g clipPath="url(#avatarRound)">
              <rect width="30" height="30" fill="#c4c4c4" />
              <circle cx="15" cy="12.3" r="7" fill="#fff" />
              <path d="M4.5 30C5 23 9 18 15 18S25 23 25.5 30Z" fill="#fff" />
            </g>
          </Avatar>
          <Caret $gap={7} $faded />
        </UserTools>
      </TopBar>

      <DashBar>
        <MenuButton>
          <span />
          <span />
          <span />
        </MenuButton>
        <DashTitle>Zeslay</DashTitle>
        <DateRange>
          <FaCalendar size={14} />
          <span>Aug 18 2023 12:36 - Now</span>
          <Caret $size={5} $gap={6} />
        </DateRange>
        <DashActions>
          <svg width="15" height="15" fill="#fff" stroke="#fff">
            <path d="M9 0.500H14.500V6ZM0.500 9V14.500H6Z" strokeWidth="0.6" strokeLinejoin="round" />
            <path d="M12 3L8.700 6.300M3 12L6.300 8.700" strokeWidth="2.8" />
          </svg>
          <FaSyncAlt size={14} />
          <svg width="11" height="12" fill="#fff">
            <rect x="0.500" y="0.500" width="4" height="11" rx="0.500" />
            <rect x="6" y="0.500" width="4" height="11" rx="0.500" />
          </svg>
        </DashActions>
      </DashBar>
      <AddButton>
        <svg width="10" height="12" stroke="#fff" strokeWidth="1.6">
          <path d="M0 6H10M5 1V11" />
        </svg>
      </AddButton>

      <Board>
        <Widget>
          <Header title="Thermometer widget" />
          <ThermoBody>
            <Thermometer />
            <Reading>
              <ReadingValue>11.00</ReadingValue>
              <ReadingTime>Last Updated: 08/18/2023 14:58</ReadingTime>
            </Reading>
          </ThermoBody>
          <ResizeHandle />
        </Widget>
        <Widget $tall>
          <Header title="Map" drop={2} />
          <MapCanvas>
            <MapDrawing />
            <ZoomControl>
              <ZoomKey>
                <svg width="12" height="12" stroke="#000" strokeWidth="2.4">
                  <path d="M0 6H12M6 0V12" />
                </svg>
              </ZoomKey>
              <ZoomKey>
                <svg width="12" height="12" stroke="#000" strokeWidth="2.4">
                  <path d="M0 6H12" />
                </svg>
              </ZoomKey>
            </ZoomControl>
            <Attribution>Leaflet</Attribution>
          </MapCanvas>
          <ResizeHandle />
        </Widget>
        <Widget>
          <Header title="Gauge widget" />
          <GaugeBody>
            <Gauge value={54} />
          </GaugeBody>
          <ResizeHandle />
        </Widget>
      </Board>
    </>
  );
}
